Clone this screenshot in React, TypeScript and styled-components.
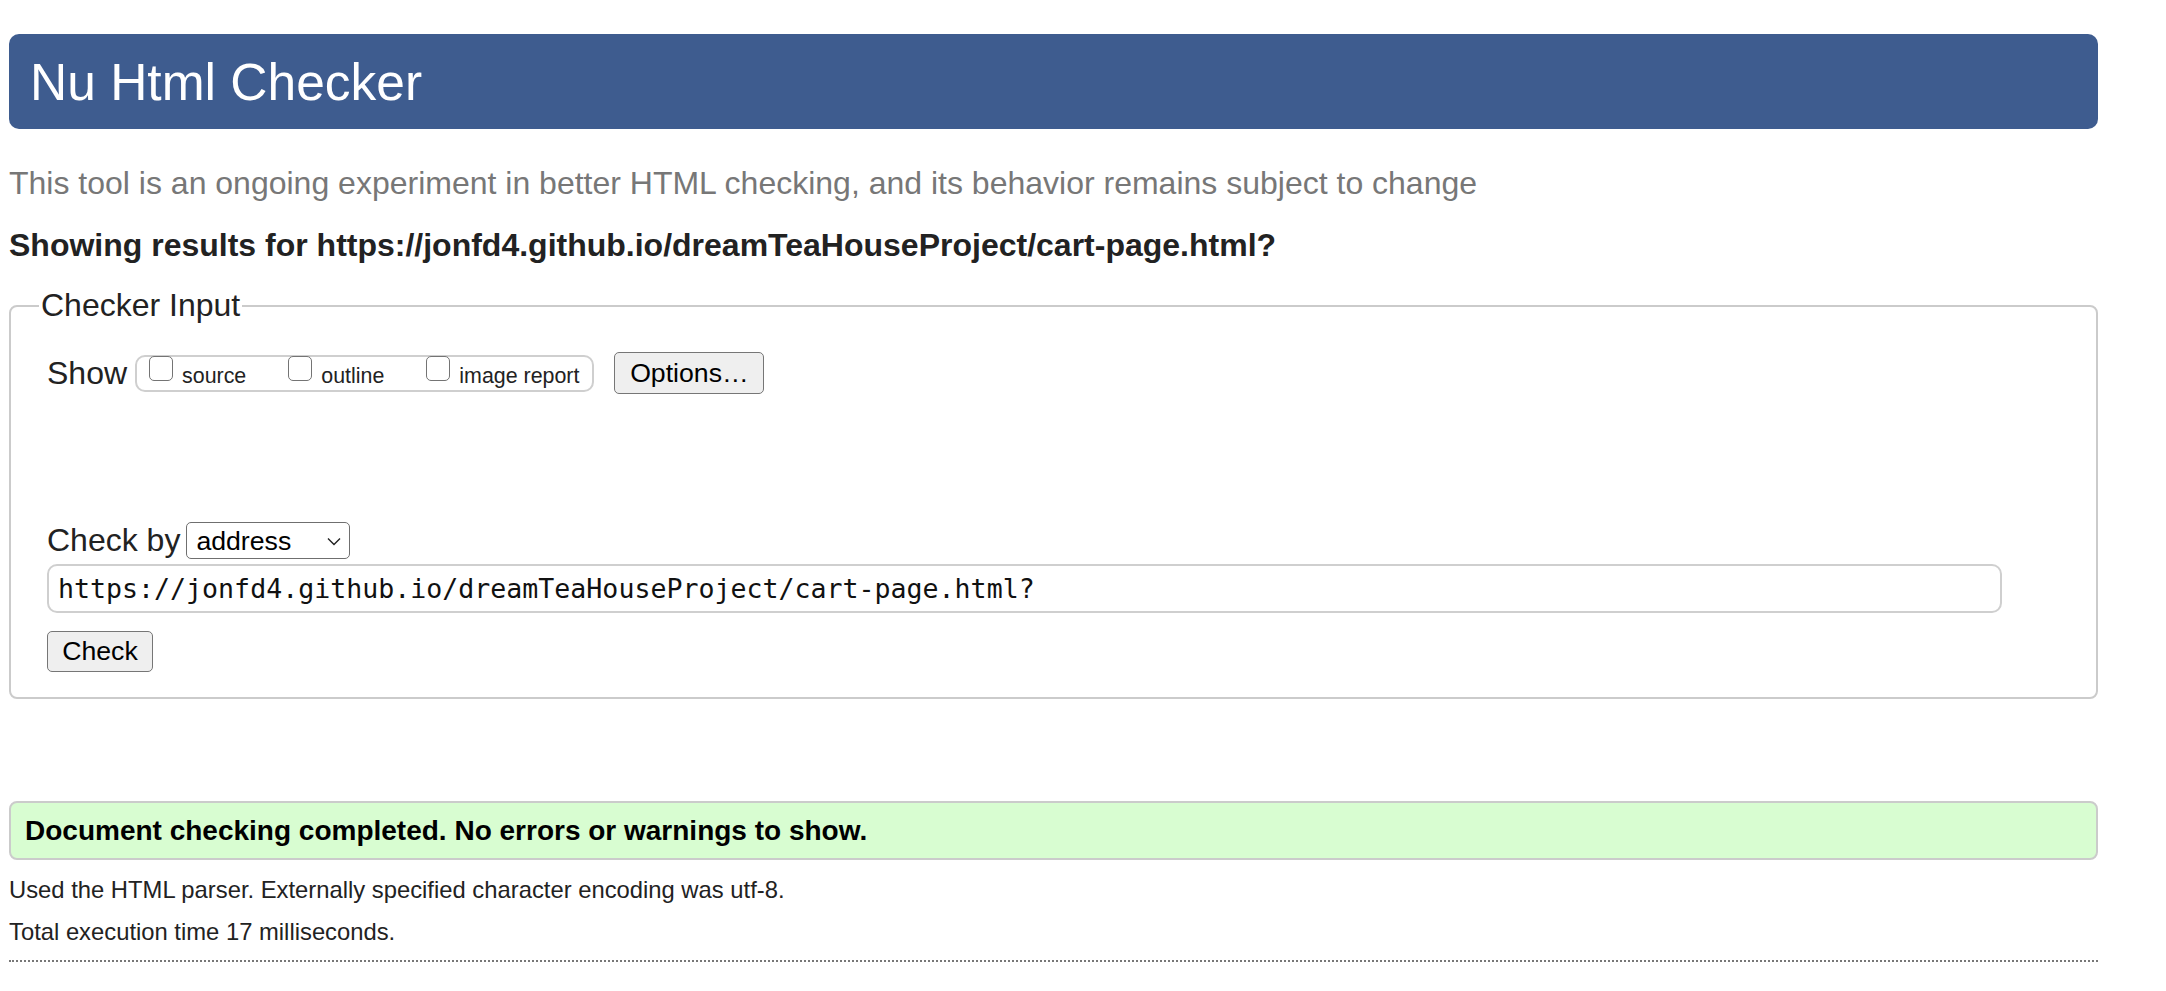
import React from "react";
import styled, { createGlobalStyle } from "styled-components";

const GlobalStyle = createGlobalStyle`
  html, body { margin: 0; padding: 0; background: #fff; }
  body {
    font-family: "Liberation Sans", Arial, Helvetica, sans-serif;
    color: #222;
  }
  * { box-sizing: border-box; }
`;

const Page = styled.div`
  width: 2098px;
  padding: 34px 0 0 9px;
`;

const Header = styled.h1`
  margin: 0;
  height: 95px;
  display: flex;
  align-items: center;
  padding-left: 21px;
  background: #3e5c8f;
  border-radius: 10px;
  color: #fff;
  font-size: 51.5px;
  font-weight: 400;
`;

const Tagline = styled.p`
  margin: 36px 0 0;
  font-size: 32px;
  line-height: 37px;
  color: #777;
`;

const ResultsTitle = styled.h2`
  margin: 25px 0 0;
  font-size: 32px;
  line-height: 37px;
  font-weight: 700;
  color: #222;
`;

const InputFieldset = styled.fieldset`
  margin: 23px 0 0;
  padding: 28px 36px 25px;
  border: 2px solid #cbcbcb;
  border-radius: 8px;
  min-width: 0;
`;

const Legend = styled.legend`
  margin-left: -8px;
  padding: 0 2px;
  font-size: 32px;
  line-height: 37px;
  color: #222;
`;

const Row = styled.div<{ $top?: number; $height: number }>`
  display: flex;
  align-items: center;
  height: ${(p) => p.$height}px;
  margin-top: ${(p) => p.$top ?? 0}px;
`;

const RowLabel = styled.span<{ $gap: number }>`
  font-size: 32px;
  line-height: 37px;
  margin-right: ${(p) => p.$gap}px;
`;

const CheckGroup = styled.div`
  display: flex;
  align-items: flex-start;
  height: 37px;
  padding: 0 13px 0 12px;
  gap: 42px;
  border: 2px solid #cfcfcf;
  border-radius: 10px;
`;

const Option = styled.label`
  display: flex;
  align-items: flex-end;
  gap: 9px;
  margin-top: -1px;
`;

const Box = styled.input`
  appearance: none;
  -webkit-appearance: none;
  width: 24px;
  height: 25px;
  margin: 0;
  background: #fff;
  border: 1.5px solid #747474;
  border-radius: 5px;
`;

const OptionText = styled.span`
  font-size: 21.4px;
  line-height: 21.33px;
  margin-bottom: -7px;
  color: #222;
`;

const Button = styled.button<{ $w: number; $h: number; $left?: number }>`
  width: ${(p) => p.$w}px;
  height: ${(p) => p.$h}px;
  margin: 0 0 0 ${(p) => p.$left ?? 0}px;
  padding: 0;
  background: #efefef;
  border: 1.5px solid #767676;
  border-radius: 5px;
  font-family: "Liberation Sans", Arial, Helvetica, sans-serif;
  font-size: 26.67px;
  color: #000;
`;

const SelectWrap = styled.div`
  position: relative;
  display: inline-block;
`;

const Select = styled.select`
  appearance: none;
  -webkit-appearance: none;
  width: 164px;
  height: 37px;
  padding: 0 0 0 9px;
  background: #fff;
  border: 1.5px solid #6f6f6f;
  border-radius: 5px;
  font-family: "Liberation Sans", Arial, Helvetica, sans-serif;
  font-size: 26.67px;
  color: #000;
`;

const Chevron = styled.svg`
  position: absolute;
  right: 9px;
  top: 50%;
  width: 14px;
  height: 9px;
  margin-top: -4px;
  pointer-events: none;
`;

const UrlInput = styled.input`
  display: block;
  width: 1955px;
  height: 49px;
  margin: 5px 0 0;
  padding: 0 0 0 9px;
  border: 2px solid #cfcfcf;
  border-radius: 10px;
  font-family: "DejaVu Sans Mono", Menlo, monospace;
  font-size: 26.6px;
  color: #111;
`;

const ButtonRow = styled.div`
  margin-top: 18px;
  display: flex;
`;

const Success = styled.div`
  margin-top: 102px;
  height: 59px;
  display: flex;
  align-items: center;
  padding-left: 14px;
  background: #d8fdd1;
  border: 2px solid #cbcbcb;
  border-radius: 8px;
  font-size: 28px;
  font-weight: 700;
  color: #000;
`;

const Detail = styled.p<{ $top: number }>`
  margin: ${(p) => p.$top}px 0 0;
  font-size: 23.8px;
  line-height: 27px;
  color: #222;
`;

const Rule = styled.div`
  margin-top: 15px;
  border-top: 2px dotted #777;
`;

export default function App() {
  return (
    <>
      <GlobalStyle />
      <Page>
        <Header>Nu Html Checker</Header>
        <Tagline>
          This tool is an ongoing experiment in better HTML checking, and its
          behavior remains subject to change
        </Tagline>
        <ResultsTitle>
          Showing results for
          https://jonfd4.github.io/dreamTeaHouseProject/cart-page.html?
        </ResultsTitle>
        <form onSubmit={(e) => e.preventDefault()}>
          <InputFieldset>
            <Legend>Checker Input</Legend>
            <Row $height={42}>
              <RowLabel $gap={8}>Show</RowLabel>
              <CheckGroup>
                <Option>
                  <Box type="checkbox" />
                  <OptionText>source</OptionText>
                </Option>
                <Option>
                  <Box type="checkbox" />
                  <OptionText>outline</OptionText>
                </Option>
                <Option>
                  <Box type="checkbox" />
                  <OptionText>image report</OptionText>
                </Option>
              </CheckGroup>
              <Button type="button" $w={150} $h={42} $left={20}>
                Options…
              </Button>
            </Row>
            <Row $height={37} $top={128}>
              <RowLabel $gap={6}>Check by</RowLabel>
              <SelectWrap>
                <Select defaultValue="address">
                  <option value="address">address</option>
                  <option value="file">file upload</option>
                  <option value="text">text input</option>
                </Select>
                <Chevron viewBox="0 0 14 9">
                  <path
                    d="M1 1.5 L7 7.5 L13 1.5"
                    fill="none"
                    stroke="#222"
                    strokeWidth="1.4"
                  />
                </Chevron>
              </SelectWrap>
            </Row>
            <UrlInput
              type="url"
              defaultValue="https://jonfd4.github.io/dreamTeaHouseProject/cart-page.html?"
            />
            <ButtonRow>
              <Button type="submit" $w={106} $h={41}>
                Check
              </Button>
            </ButtonRow>
          </InputFieldset>
        </form>
        <Success>Document checking completed. No errors or warnings to show.</Success>
        <Detail $top={16}>
          Used the HTML parser. Externally specified character encoding was
          utf-8.
        </Detail>
        <Detail $top={15}>Total execution time 17 milliseconds.</Detail>
        <Rule />
      </Page>
    </>
  );
}
